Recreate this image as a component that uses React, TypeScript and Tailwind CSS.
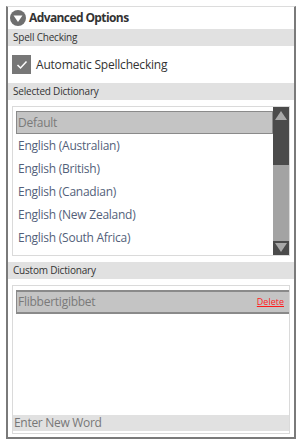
const dictionaries = [
  'English (Australian)',
  'English (British)',
  'English (Canadian)',
  'English (New Zealand)',
  'English (South Africa)',
];

function SectionBar({ label }: { label: string }) {
  return (
    <div className="h-[17px] bg-[#e1e1e1] pl-[5px] text-[10px] leading-[17px] tracking-[-0.2px] text-[#333]">
      {label}
    </div>
  );
}

export default function App() {
  return (
    <div className="w-[300px] h-[445px] bg-white pt-[6px] pl-[6px] font-['Open_Sans',sans-serif]">
      <div className="w-[290px] h-[433px] flex flex-col border-x-2 border-b-2 border-t border-[#7a7a7a] border-t-[#dcdcdc]">
        {/* Header */}
        <div className="h-[22px] flex items-center gap-[3px] pl-[2px]">
          <svg width="16" height="16" viewBox="0 0 16 16">
            <circle cx="8" cy="8" r="8" fill="#6f6f6f" />
            <path d="M3.5 5.5 H12.5 L8 12 Z" fill="#fff" />
          </svg>
          <span className="text-[12px] font-bold tracking-[-0.6px] text-[#333]">Advanced Options</span>
        </div>

        <SectionBar label="Spell Checking" />

        {/* Checkbox */}
        <div className="h-[37px] flex items-center gap-[5px] pl-[4px]">
          <div className="w-[19px] h-[19px] bg-[#777] flex items-center justify-center">
            <svg width="12" height="10" viewBox="0 0 12 10">
              <path d="M1.5 5 L4.5 8 L10.5 1.5" fill="none" stroke="#fff" strokeWidth="1.5" />
            </svg>
          </div>
          <span className="text-[12px] tracking-[-0.2px] text-[#333]">Automatic Spellchecking</span>
        </div>

        <SectionBar label="Selected Dictionary" />

        {/* Dictionary list */}
        <div className="mx-[4px] mt-[6px] h-[150px] border border-[#dadada] flex">
          <div className="flex-1 pt-[4px] pl-[3px]">
            <div className="h-[23px] bg-[#c4c4c4] border border-[#8a8a8a] pl-[1px] text-[12px] leading-[21px] tracking-[-0.25px] text-[#7a7a7a]">
              Default
            </div>
            {dictionaries.map((d) => (
              <div key={d} className="h-[23px] pl-[2px] text-[12px] leading-[23px] tracking-[-0.25px] text-[#535f7a]">
                {d}
              </div>
            ))}
          </div>
          <div className="w-[16px] flex flex-col">
            <div className="h-[58px] bg-[#4b4b4b] flex justify-center pt-[4px]">
              <svg width="12" height="9" viewBox="0 0 12 9">
                <path d="M6 0 L12 9 H0 Z" fill="#a8a8a8" />
              </svg>
            </div>
            <div className="flex-1 bg-[#a3a3a3]" />
            <div className="h-[14px] bg-[#4b4b4b] flex justify-center pt-[2px]">
              <svg width="12" height="9" viewBox="0 0 12 9">
                <path d="M0 0 H12 L6 9 Z" fill="#a8a8a8" />
              </svg>
            </div>
          </div>
        </div>

        <div className="mt-[6px]">
          <SectionBar label="Custom Dictionary" />
        </div>

        {/* Custom dictionary */}
        <div className="mx-[4px] mt-[6px] h-[149px] border border-[#dadada] flex flex-col pt-[4px] pb-[2px]">
          <div className="ml-[3px] h-[24px] bg-[#c4c4c4] border-y-2 border-l border-[#8a8a8a] flex items-center justify-between pl-[1px] pr-[5px]">
            <span className="text-[12px] tracking-[-0.25px] text-[#7a7a7a]">Flibbertigibbet</span>
            <span className="text-[9px] text-[#ff1a1a] underline">Delete</span>
          </div>
          <div className="flex-1" />
          <div className="h-[16px] bg-[#e1e1e1] pl-[1px] text-[12px] leading-[16px] tracking-[-0.3px] text-[#777]">
            Enter New Word
          </div>
        </div>
      </div>
    </div>
  );
}
